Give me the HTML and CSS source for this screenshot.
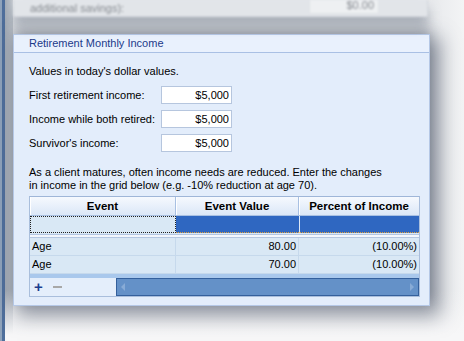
FILE: index.html
```html
<!DOCTYPE html>
<html lang="en">
<head>
    <meta charset="UTF-8">
    <title>Retirement Monthly Income</title>
    <link rel="stylesheet" href="styles.css">
</head>
<body>
    <div class="desktop">
        <div class="edge"></div>
        <div class="stage">
            <!-- card behind, out of focus -->
            <div class="ghost-card">
                <div class="ghost-text">additional savings):</div>
                <div class="ghost-input">$0.00</div>
            </div>

            <section class="panel">
                <div class="panel-title">Retirement Monthly Income</div>
                <div class="panel-body">
                    <p class="note">Values in today's dollar values.</p>

                    <div class="field">
                        <label>First retirement income:</label>
                        <input type="text" class="money" value="$5,000">
                    </div>
                    <div class="field">
                        <label>Income while both retired:</label>
                        <input type="text" class="money" value="$5,000">
                    </div>
                    <div class="field">
                        <label>Survivor's income:</label>
                        <input type="text" class="money" value="$5,000">
                    </div>

                    <p class="hint">As a client matures, often income needs are reduced. Enter the changes<br>in income in the grid below (e.g. -10% reduction at age 70).</p>

                    <div class="grid">
                        <div class="grid-row grid-head">
                            <div class="cell">Event</div>
                            <div class="cell">Event Value</div>
                            <div class="cell">Percent of Income</div>
                        </div>
                        <div class="grid-row new-row">
                            <div class="cell focus"></div>
                            <div class="cell picked"></div>
                            <div class="cell picked"></div>
                        </div>
                        <div class="spacer"></div>
                        <div class="grid-row data-row">
                            <div class="cell">Age</div>
                            <div class="cell num">80.00</div>
                            <div class="cell num">(10.00%)</div>
                        </div>
                        <div class="grid-row data-row">
                            <div class="cell">Age</div>
                            <div class="cell num">70.00</div>
                            <div class="cell num">(10.00%)</div>
                        </div>
                        <div class="band"></div>
                        <div class="grid-footer">
                            <div class="tools">
                                <span class="add">+</span>
                                <span class="remove"></span>
                            </div>
                            <div class="scrollbar">
                                <span class="arrow left"></span>
                                <span class="arrow right"></span>
                            </div>
                        </div>
                    </div>
                </div>
            </section>
        </div>
    </div>
</body>
</html>
```
FILE: styles.css
```css
html, body {
    margin: 0;
    padding: 0;
}
body {
    width: 464px;
    height: 341px;
    overflow: hidden;
    background-color: #f7f7f8;
    font-family: 'Liberation Sans', Tahoma, Arial, sans-serif;
    font-size: 11px;
    color: #000;
}
.desktop {
    display: flex;
    height: 341px;
}
.edge {
    width: 5px;
    flex-shrink: 0;
    background: linear-gradient(to right, #8fa3bb 0, #8fa3bb 2px, #4f6f9c 2px, #4f6f9c 5px);
}
.stage {
    flex: 1;
    background:
        linear-gradient(to bottom, rgba(247, 247, 248, 0) 0, rgba(247, 247, 248, 0) 290px, #f7f7f8 335px),
        linear-gradient(to right, #a3acb7 0, #c3c8ce 8px, #e6e8eb 8px, #e6e8eb 420px, #f3f4f5 459px);
    padding-left: 8px;
}

/* out of focus card at the top */
.ghost-card {
    width: 415px;
    height: 17px;
    box-sizing: border-box;
    display: flex;
    justify-content: space-between;
    align-items: flex-end;
    padding: 0 48px 0 16px;
    background-color: #e2e5e9;
    border: 1px solid #d2d6dc;
    border-top: none;
    border-radius: 0 0 2px 2px;
    color: #868a90;
    filter: blur(0.8px);
    box-shadow: 0 9px 12px rgba(110, 120, 135, 0.5);
}
.ghost-text {
    line-height: 13px;
    padding-bottom: 1px;
}
.ghost-input {
    align-self: flex-start;
    width: 70px;
    height: 14px;
    box-sizing: border-box;
    text-align: right;
    padding-right: 4px;
    background-color: #eef0f2;
    border: 1px solid #e0e2e6;
    border-top: none;
    line-height: 11px;
}

.panel {
    width: 417px;
    margin-top: 17px;
    box-sizing: border-box;
    background-color: #e3edfb;
    border: 1px solid #b5c8e6;
    box-shadow: 7px 7px 18px 3px rgba(55, 65, 85, 0.5), 0 -6px 12px rgba(90, 100, 115, 0.4);
}
.panel-title {
    height: 17px;
    line-height: 17px;
    padding-left: 15px;
    color: #1c3a8a;
    background-color: #e9f1fd;
    border-bottom: 1px solid #a9c0e4;
}
.panel-body {
    padding: 11px 8px 8px 15px;
}
.note {
    margin: 0 0 8px;
    line-height: 14px;
}
.field {
    display: flex;
    align-items: center;
    margin-bottom: 6px;
}
.field label {
    width: 132px;
}
.money {
    width: 71px;
    height: 18px;
    box-sizing: border-box;
    padding: 0 2px 0 0;
    border: 1px solid #b6c6de;
    background-color: #fff;
    text-align: right;
    font-family: inherit;
    font-size: 11px;
    color: #000;
    outline: none;
}
.hint {
    margin: 14px 0 4px;
    line-height: 13px;
}

/* the events grid */
.grid {
    width: 391px;
    box-sizing: border-box;
    border: 1px solid #a9bedc;
    border-top-color: #9fb6d8;
    background-color: #d9e8f5;
}
.grid-row {
    display: grid;
    grid-template-columns: 146px 123px 1fr;
}
.grid-head {
    height: 18px;
    background: linear-gradient(to bottom, #f6f9fe, #dbe7f7);
    border-bottom: 1px solid #a8c0e2;
}
.grid-head .cell {
    text-align: center;
    font-weight: bold;
    font-size: 11.5px;
    line-height: 18px;
    border-right: 1px solid #a8c0e2;
    box-shadow: inset 1px 0 0 #ffffff;
}
.grid-head .cell:last-child {
    border-right: none;
}
.new-row {
    height: 17px;
}
.new-row .focus {
    background-color: #d9e8f5;
    border: 1px dotted #222;
}
.new-row .picked {
    background-color: #2f67c1;
    border-bottom: 1px dotted #e0a040;
}
.new-row .picked + .picked {
    border-left: 1px solid #dde8f6;
}
.spacer {
    height: 2px;
    margin-top: 1px;
    background-color: #f3f7fd;
    border-top: 1px solid #b3c6e2;
    border-bottom: 1px solid #b3c6e2;
}
.data-row {
    height: 17px;
    line-height: 17px;
    border-bottom: 1px solid #c6d9ec;
}
.data-row .cell {
    padding: 0 2px;
    border-right: 1px solid #c6d9ec;
}
.data-row .cell:last-child {
    border-right: none;
}
.num {
    text-align: right;
}
.band {
    height: 4px;
    background-color: #a9c8ec;
}
.grid-footer {
    display: flex;
    height: 18px;
    background-color: #e4eefb;
}
.tools {
    width: 86px;
    display: flex;
    align-items: center;
    gap: 10px;
    padding-left: 4px;
    box-sizing: border-box;
}
.add {
    color: #1b3d8e;
    font-weight: bold;
    font-size: 15px;
    line-height: 14px;
}
.remove {
    width: 9px;
    height: 2px;
    background-color: #a8a8a8;
}
.scrollbar {
    flex: 1;
    display: flex;
    justify-content: space-between;
    align-items: center;
    padding: 0 4px;
    background-color: #6491c8;
    border: 1px solid #34609c;
}
.arrow {
    width: 0;
    height: 0;
    border-top: 4px solid transparent;
    border-bottom: 4px solid transparent;
}
.arrow.left {
    border-right: 4px solid #88abd6;
}
.arrow.right {
    border-left: 4px solid #88abd6;
}
```
